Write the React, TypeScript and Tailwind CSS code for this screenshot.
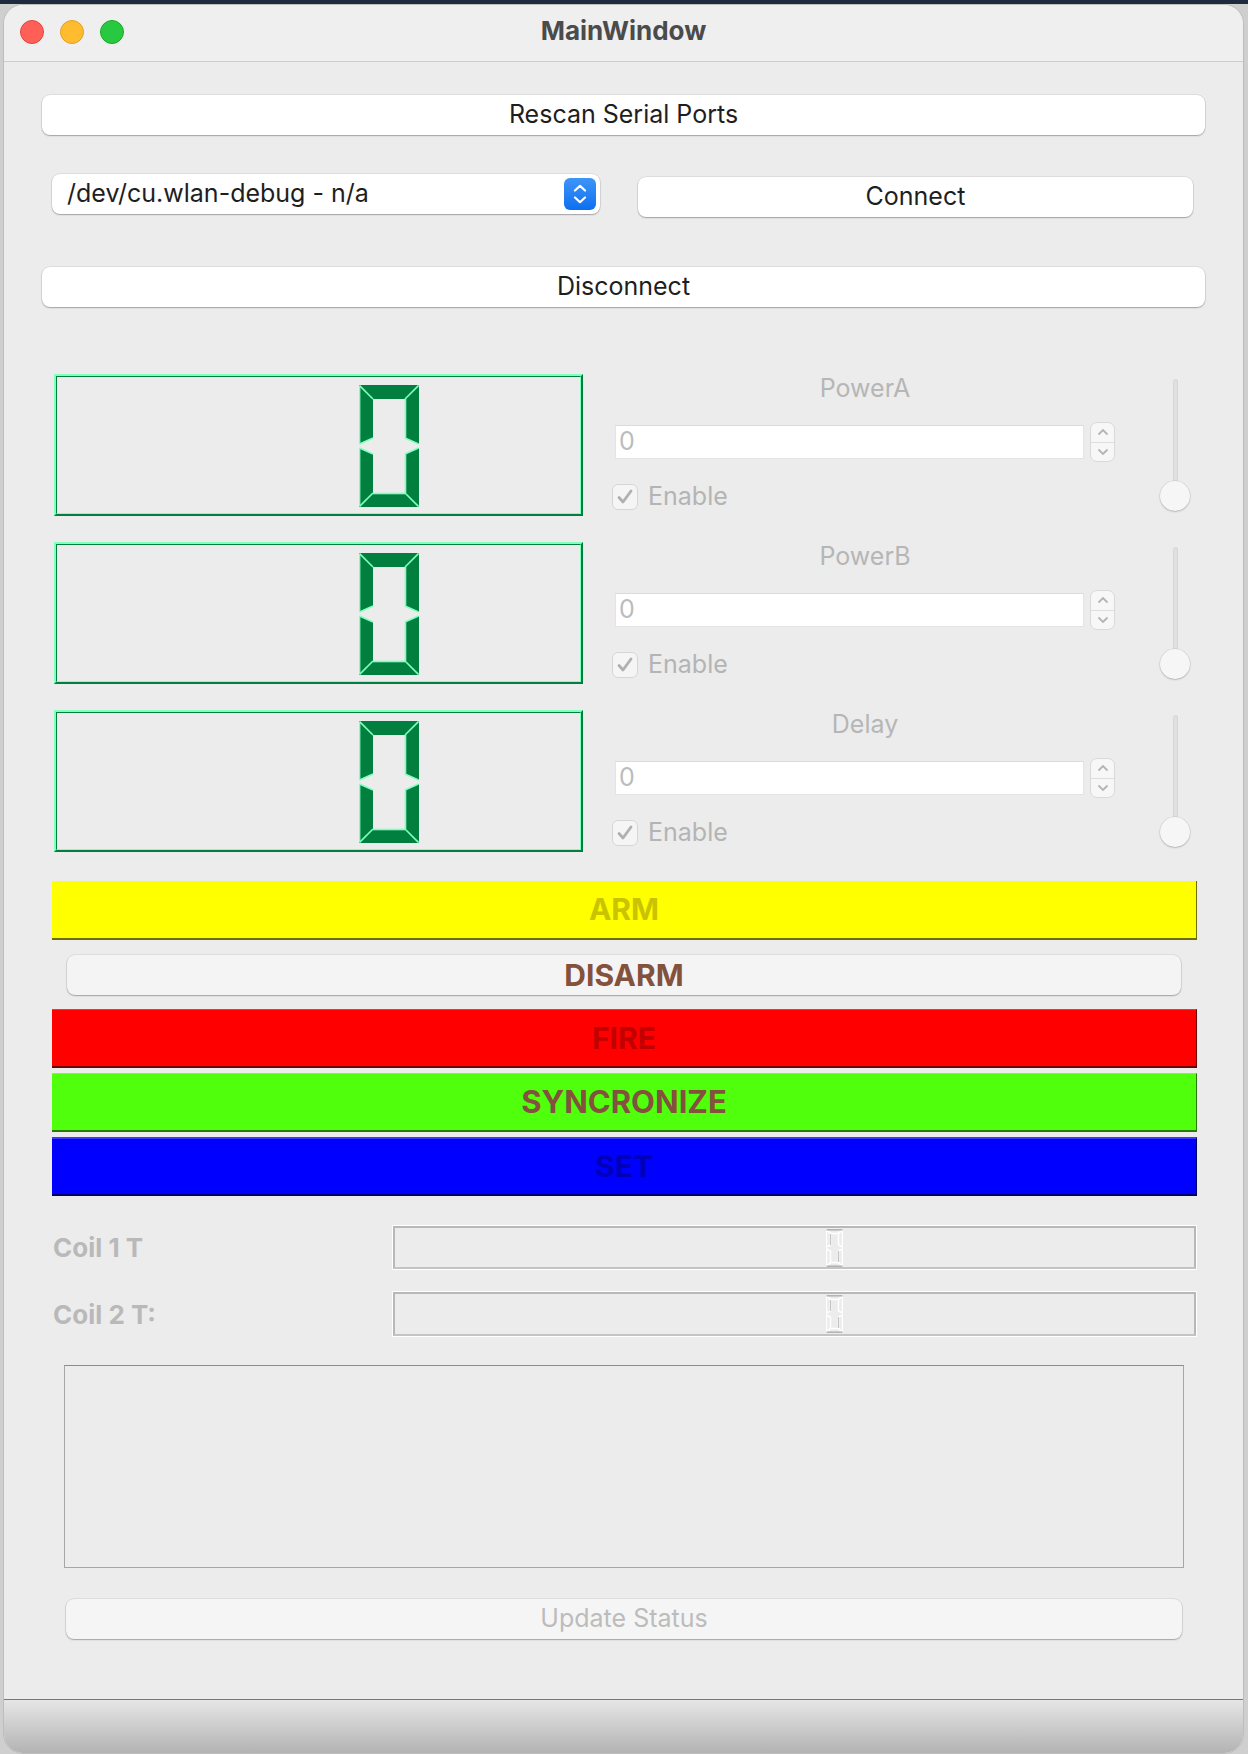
import React from "react";

const FONT = "font-['Inter','Liberation_Sans',sans-serif]";

function BigDigit() {
  return (
    <svg width="60" height="122" viewBox="0 0 60 122">
      <g fill="#007f3f">
        <polygon points="0,0 60,0 46,14 14,14" />
        <polygon points="60,0 60,59 46,53 46,14" />
        <polygon points="60,63 60,122 46,108 46,69" />
        <polygon points="0,122 14,108 46,108 60,122" />
        <polygon points="0,63 14,69 14,108 0,122" />
        <polygon points="0,0 14,14 14,53 0,59" />
      </g>
      <g stroke="#80ffbf" strokeWidth="1.6" fill="none">
        <line x1="0.5" y1="0.5" x2="14" y2="14" />
        <line x1="59.5" y1="0.5" x2="46" y2="14" />
        <line x1="0.5" y1="121.5" x2="14" y2="108" />
        <line x1="59.5" y1="121.5" x2="46" y2="108" />
        <line x1="46.5" y1="14" x2="46.5" y2="53" />
        <line x1="46.5" y1="69" x2="46.5" y2="108" />
        <line x1="14" y1="108.5" x2="46" y2="108.5" />
        <line x1="0.5" y1="59" x2="14" y2="53" />
        <line x1="0.5" y1="63" x2="14" y2="69" />
        <line x1="59.5" y1="59" x2="46" y2="53" />
        <line x1="59.5" y1="63" x2="46" y2="69" />
        <line x1="0.6" y1="63" x2="0.6" y2="121" />
        <line x1="0.6" y1="1" x2="0.6" y2="59" />
      </g>
    </svg>
  );
}

function SmallDigit() {
  const polys = [
    "0.5,0.5 16.5,0.5 12.5,4.5 4.5,4.5",
    "16.5,0.5 16.5,18 12.5,16 12.5,4.5",
    "16.5,20 16.5,37.5 12.5,33.5 12.5,22",
    "0.5,37.5 4.5,33.5 12.5,33.5 16.5,37.5",
    "0.5,20 4.5,22 4.5,33.5 0.5,37.5",
    "0.5,0.5 4.5,4.5 4.5,16 0.5,18",
  ];
  return (
    <svg width="17" height="38" viewBox="0 0 17 38">
      {polys.map((p, i) => (
        <polygon key={i} points={p} fill="none" stroke="#ffffff" strokeWidth="1.4" />
      ))}
      <line x1="0.5" y1="0.8" x2="16.5" y2="0.8" stroke="#b4b4b4" strokeWidth="1.6" />
      <line x1="0.5" y1="37.2" x2="16.5" y2="37.2" stroke="#b4b4b4" strokeWidth="1.6" />
      <line x1="4.5" y1="5" x2="4.5" y2="16" stroke="#c4c4c4" strokeWidth="1" />
      <line x1="12.5" y1="22" x2="12.5" y2="33" stroke="#c4c4c4" strokeWidth="1" />
    </svg>
  );
}

function LcdPanel() {
  return (
    <div className="ml-[50px] w-[529px] h-[142px] shrink-0 border-2 border-t-[#80ffbf] border-l-[#80ffbf] border-b-[#007f3f] border-r-[#007f3f]">
      <div className="h-full w-full border border-t-[#007f3f] border-l-[#007f3f] border-b-[#80ffbf] border-r-[#80ffbf] flex items-start">
        <div className="ml-[302px] mt-[8px] flex">
          <BigDigit />
        </div>
      </div>
    </div>
  );
}

function ControlRow({ label, first }: { label: string; first?: boolean }) {
  return (
    <div className={first ? "mt-[67px] flex h-[142px]" : "mt-[26px] flex h-[142px]"}>
      <LcdPanel />
      <div className="ml-[29px] w-[506px] flex flex-col">
        <div className="h-[30px] flex items-center justify-center text-[25px] text-[#b6b6b6]">{label}</div>
        <div className="mt-[18px] h-[40px] flex items-center">
          <div className="ml-[3px] w-[469px] h-[34px] bg-white border border-[#e4e4e4] border-t-[#dadada] flex items-center pl-[3px] text-[25px] text-[#bcbcbc]">
            0
          </div>
          <div className="ml-[6px] w-[25px] h-[40px] rounded-[7px] border border-[#d9d9d9] bg-[#f7f7f7] flex flex-col">
            <div className="flex-1 flex items-center justify-center border-b border-[#dedede]">
              <svg width="12" height="8" viewBox="0 0 12 8">
                <path d="M1.5 6.5 L6 2 L10.5 6.5" stroke="#b4b4b4" strokeWidth="1.8" fill="none" />
              </svg>
            </div>
            <div className="flex-1 flex items-center justify-center">
              <svg width="12" height="8" viewBox="0 0 12 8">
                <path d="M1.5 1.5 L6 6 L10.5 1.5" stroke="#b4b4b4" strokeWidth="1.8" fill="none" />
              </svg>
            </div>
          </div>
        </div>
        <div className="mt-[22px] h-[26px] flex items-center">
          <div className="w-[26px] h-[26px] rounded-[6px] border border-[#d6d6d6] bg-[#f5f5f5] flex items-center justify-center">
            <svg width="18" height="18" viewBox="0 0 18 18">
              <path d="M3 9.5 L7 14 L15 3" stroke="#b0b0b0" strokeWidth="2.8" fill="none" strokeLinecap="round" strokeLinejoin="round" />
            </svg>
          </div>
          <span className="ml-[10px] text-[25px] text-[#b4b4b4]">Enable</span>
        </div>
      </div>
      <div className="ml-[42px] w-[30px] flex flex-col items-center">
        <div className="mt-[5px] w-[5px] h-[110px] rounded-full bg-[#e0e0e0] border border-[#d6d6d6]"></div>
        <div className="-mt-[8px] w-[30px] h-[30px] rounded-full bg-[#f6f6f6] shadow-[0_0_0_0.5px_rgba(0,0,0,0.1),0_1px_2px_rgba(0,0,0,0.18)]"></div>
      </div>
    </div>
  );
}

function CoilRow({ label, top, h }: { label: string; top: string; h: string }) {
  return (
    <div className={top + " flex items-center"}>
      <div className="ml-[49px] w-[339px] text-[26px] font-bold text-[#b9b9b9]">{label}</div>
      <div className={h + " w-[805px] border border-white"}>
        <div className="h-full w-full border-2 border-[#b8b8b8] border-b-[#c4c4c4] flex items-start">
          <div className="ml-[431px] mt-[1px] flex">
            <SmallDigit />
          </div>
        </div>
      </div>
    </div>
  );
}

const btnShadow = "shadow-[0_0_0_0.5px_rgba(0,0,0,0.12),0_1px_1.5px_rgba(0,0,0,0.28)]";

export default function App() {
  return (
    <div className={FONT + " w-[1248px] h-[1754px] bg-[#cfcfcf] overflow-hidden"}>
      <div className="h-[4px] bg-[#1d2b3c]"></div>
      <div className="ml-[3px] w-[1241px] h-[1750px] bg-[#ececec] rounded-[20px] overflow-hidden flex flex-col border border-[#bdbdbd]">
        {/* title bar */}
        <div className="h-[57px] shrink-0 bg-[#efefef] border-b border-[#cdcdcd] flex items-center relative">
          <div className="ml-[16px] mb-[2px] flex gap-[16px]">
            <div className="w-[24px] h-[24px] rounded-full bg-[#fe5f57] border border-[#e2463f]"></div>
            <div className="w-[24px] h-[24px] rounded-full bg-[#febc2e] border border-[#dea123]"></div>
            <div className="w-[24px] h-[24px] rounded-full bg-[#28c840] border border-[#1aab29]"></div>
          </div>
          <div className="absolute inset-0 pb-[5px] flex items-center justify-center text-[26px] font-bold text-[#4b4b4b] pointer-events-none">
            MainWindow
          </div>
        </div>

        {/* Rescan */}
        <div className={"mt-[33px] ml-[38px] w-[1163px] h-[40px] rounded-[8px] bg-white flex items-center justify-center text-[25px] text-[#1e1e1e] " + btnShadow}>
          Rescan Serial Ports
        </div>

        {/* combo + connect */}
        <div className="mt-[39px] flex items-start">
          <div className={"ml-[48px] w-[548px] h-[40px] rounded-[8px] bg-white flex items-center justify-between pl-[15px] pr-[4px] text-[25px] text-[#1e1e1e] " + btnShadow}>
            <span>/dev/cu.wlan-debug - n/a</span>
            <div className="w-[32px] h-[32px] rounded-[6px] bg-gradient-to-b from-[#3d95f8] to-[#0a6ff0] flex flex-col items-center justify-center gap-[4px]">
              <svg width="14" height="8" viewBox="0 0 14 8">
                <path d="M2 6.5 L7 1.8 L12 6.5" stroke="#fff" strokeWidth="2.2" fill="none" strokeLinecap="round" strokeLinejoin="round" />
              </svg>
              <svg width="14" height="8" viewBox="0 0 14 8">
                <path d="M2 1.5 L7 6.2 L12 1.5" stroke="#fff" strokeWidth="2.2" fill="none" strokeLinecap="round" strokeLinejoin="round" />
              </svg>
            </div>
          </div>
          <div className={"ml-[38px] mt-[3px] w-[555px] h-[40px] rounded-[8px] bg-white flex items-center justify-center text-[25px] text-[#1e1e1e] " + btnShadow}>
            Connect
          </div>
        </div>

        {/* Disconnect */}
        <div className={"mt-[50px] ml-[38px] w-[1163px] h-[40px] rounded-[8px] bg-white flex items-center justify-center text-[25px] text-[#1e1e1e] " + btnShadow}>
          Disconnect
        </div>

        <ControlRow label="PowerA" first />
        <ControlRow label="PowerB" />
        <ControlRow label="Delay" />

        {/* colored buttons */}
        <div className="mt-[29px] ml-[48px] w-[1145px] h-[59px] bg-[#ffff00] border-r border-b-2 border-[#6e6e00] flex items-center justify-center text-[30px] font-bold text-[#c9c300]">
          ARM
        </div>
        <div className={"mt-[15px] ml-[63px] w-[1114px] h-[40px] rounded-[8px] bg-[#f4f4f4] flex items-center justify-center text-[30px] font-bold text-[#83513c] " + btnShadow}>
          DISARM
        </div>
        <div className="mt-[14px] ml-[48px] w-[1145px] h-[59px] bg-[#ff0000] border-t border-[#ff3030] border-r border-r-[#700000] border-b-2 border-b-[#700000] flex items-center justify-center text-[30px] font-bold text-[#c20000]">
          FIRE
        </div>
        <div className="mt-[5px] ml-[48px] w-[1145px] h-[59px] bg-[#50ff0c] border-t border-[#70ff40] border-r border-r-[#2a7a06] border-b-2 border-b-[#2a7a06] flex items-center justify-center text-[31px] font-bold text-[#83513c]">
          SYNCRONIZE
        </div>
        <div className="mt-[5px] ml-[48px] w-[1145px] h-[59px] bg-[#0000ff] border-t-2 border-[#3a3aff] border-r border-r-[#00006a] border-b-2 border-b-[#00006a] flex items-center justify-center text-[30px] font-bold text-[#0000bb]">
          SET
        </div>

        <CoilRow label="Coil 1 T" top="mt-[29px]" h="h-[45px]" />
        <CoilRow label="Coil 2 T:" top="mt-[21px]" h="h-[46px]" />

        <div className="mt-[28px] ml-[60px] w-[1120px] h-[203px] border border-[#a6a6a6] border-t-[#8c8c8c] bg-[#ececec]"></div>

        <div className={"mt-[31px] ml-[62px] w-[1116px] h-[40px] rounded-[8px] bg-[#f5f5f5] flex items-center justify-center text-[25px] text-[#bcbcbc] " + btnShadow}>
          Update Status
        </div>

        <div className="flex-1"></div>
        <div className="h-[54px] shrink-0 border-t border-[#767676] bg-gradient-to-b from-[#e6e6e6] to-[#b3b3b3]"></div>
      </div>
    </div>
  );
}
